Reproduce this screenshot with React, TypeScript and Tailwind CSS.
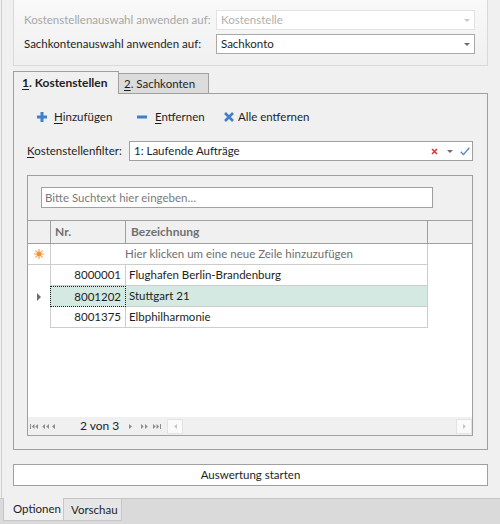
import { FunctionComponent, ReactNode } from "react";

const DropArrow: FunctionComponent<{ color?: string }> = ({ color = "#6d6d6d" }) => (
  <svg width="6" height="3" viewBox="0 0 6 3">
    <path d="M0 0h6L3 3z" fill={color} />
  </svg>
);

const Combo: FunctionComponent<{ value: string; disabled?: boolean }> = ({ value, disabled }) => (
  <div
    className={`flex h-full flex-1 items-center justify-between bg-white pl-[4px] pr-[4px] border ${
      disabled ? "border-[#e2e2e2] text-[#b0b0b0]" : "border-[#a9a9a9] text-[#1e1e1e]"
    }`}
  >
    <span>{value}</span>
    <DropArrow color={disabled ? "#c8c8c8" : "#6d6d6d"} />
  </div>
);

const U: FunctionComponent<{ children: ReactNode }> = ({ children }) => (
  <span className="underline underline-offset-[2px]">{children}</span>
);

const Star = () => (
  <svg width="10" height="10" viewBox="0 0 10 10">
    <g stroke="#f5a04a" strokeWidth="1.2" strokeLinecap="round">
      <path d="M5 0.5v9M0.5 5h9M1.8 1.8l6.4 6.4M8.2 1.8l-6.4 6.4" />
    </g>
    <circle cx="5" cy="5" r="2.3" fill="#f39234" />
  </svg>
);

const NavGlyph: FunctionComponent<{ d: string; w: number; color?: string }> = ({ d, w, color = "#8c8c8c" }) => (
  <svg width={w} height="5" viewBox={`0 0 ${w} 5`} className="shrink-0">
    <path d={d} fill={color} />
  </svg>
);

const rows = [
  { nr: "8000001", name: "Flughafen Berlin-Brandenburg" },
  { nr: "8001202", name: "Stuttgart 21", selected: true },
  { nr: "8001375", name: "Elbphilharmonie" },
];

export default function App() {
  return (
    <div className="relative h-[524px] w-[500px] overflow-hidden whitespace-nowrap bg-[#f0f0f0] font-['Lato',sans-serif] text-[11.5px] leading-none text-[#1e1e1e]">
      <div className="ml-[1px] flex h-[498px] flex-col border-l border-[#cfcfcf] pl-[11px] pr-[12px]">
        {/* group box */}
        <div className="h-[66px] border-x border-b border-[#d9d9d9] bg-linear-to-b from-[#f9f9f9] to-[#f0f0f0] pl-[10px] pr-[12px] pt-[10px]">
          <div className="flex h-[20px] items-center">
            <div className="w-[192px] text-[#a6a6a6]">Kostenstellenauswahl anwenden auf:</div>
            <Combo value="Kostenstelle" disabled />
          </div>
          <div className="mt-[4px] flex h-[20px] items-center">
            <div className="w-[192px]">Sachkontenauswahl anwenden auf:</div>
            <Combo value="Sachkonto" />
          </div>
        </div>

        {/* tabs */}
        <div className="mt-[5px] flex h-[22px] items-end">
          <div className="relative z-10 -mb-px flex h-[23px] w-[106px] items-center border border-b-0 border-[#a0a0a0] bg-[#f0f0f0] pl-[8px] text-[12px] font-bold">
            <span>
              <U>1</U>. Kostenstellen
            </span>
          </div>
          <div className="flex h-[20px] w-[90px] items-center border-r border-t border-[#a0a0a0] bg-[#dcdcdc] pl-[5px]">
            <span>
              <U>2</U>. Sachkonten
            </span>
          </div>
        </div>

        {/* tab page */}
        <div className="flex h-[357px] flex-col border border-[#a0a0a0] pl-[13px] pr-[14px]">
          <div className="mt-[13px] flex h-[20px] items-center pl-[10px]">
            <div className="flex w-[100px] items-center gap-[7px]">
              <svg width="10" height="10" viewBox="0 0 10 10">
                <path d="M3.5 0h3v3.5H10v3H6.5V10h-3V6.5H0v-3h3.5z" fill="#3f7fc9" />
              </svg>
              <span>
                <U>H</U>inzufügen
              </span>
            </div>
            <div className="flex w-[87px] items-center gap-[8px]">
              <svg width="10" height="10" viewBox="0 0 10 10">
                <path d="M0 3.5h10v3H0z" fill="#3f7fc9" />
              </svg>
              <span>
                <U>E</U>ntfernen
              </span>
            </div>
            <div className="flex items-center gap-[4px]">
              <svg width="10" height="10" viewBox="0 0 10 10">
                <path d="M1 1l8 8M9 1l-8 8" stroke="#3f7fc9" strokeWidth="2.6" />
              </svg>
              <span>
                Alle ent<U>f</U>ernen
              </span>
            </div>
          </div>

          <div className="mt-[14px] flex h-[20px] items-center">
            <div className="w-[102px]">
              <U>K</U>ostenstellenfilter:
            </div>
            <div className="flex h-full flex-1 items-center border border-[#a0a0a0] bg-white pl-[4px] pr-[2px]">
              <span className="flex-1">1: Laufende Aufträge</span>
              <svg width="7" height="7" viewBox="0 0 7 7" className="mr-[9px]">
                <path d="M1 1l5 5M6 1l-5 5" stroke="#d13438" strokeWidth="1.5" />
              </svg>
              <span className="mr-[7px] flex">
                <DropArrow />
              </span>
              <svg width="10" height="9" viewBox="0 0 10 9">
                <path d="M0.8 4.8l2.6 2.8L9.4 0.8" stroke="#4a86c8" strokeWidth="1.3" fill="none" />
              </svg>
            </div>
          </div>

          {/* grid */}
          <div className="mt-[14px] flex h-[261px] flex-col border border-[#a0a0a0] bg-white">
            <div className="h-[44px] bg-[#f0f0f0] pl-[13px] pt-[11px]">
              <div className="flex h-[21px] w-[392px] items-center border border-[#a0a0a0] bg-white pl-[3px] text-[#7a7a7a]">
                Bitte Suchtext hier eingeben…
              </div>
            </div>
            <div className="flex h-[24px] border-y border-[#a0a0a0] bg-[#f0f0f0] text-[12px] font-bold text-[#707070]">
              <div className="w-[23px] border-r border-[#a0a0a0]" />
              <div className="flex w-[75px] items-center border-r border-[#a0a0a0] pl-[4px]">Nr.</div>
              <div className="flex w-[302px] items-center border-r border-[#a0a0a0] pl-[5px]">Bezeichnung</div>
              <div className="flex-1" />
            </div>
            <div className="flex-1 bg-white">
              <div className="flex h-[21px] w-[400px] border-b border-r border-[#cdcdcd]">
                <div className="flex w-[23px] items-center justify-center border-r border-[#cdcdcd]">
                  <Star />
                </div>
                <div className="flex flex-1 items-center justify-center text-[#6e6e6e]">
                  Hier klicken um eine neue Zeile hinzuzufügen
                </div>
              </div>
              {rows.map((r) => (
                <div key={r.nr} className="flex h-[21px] w-[400px]">
                  <div className="flex w-[22px] items-center justify-center">
                    {r.selected && (
                      <svg width="4" height="8" viewBox="0 0 4 8">
                        <path d="M0 0l4 4-4 4z" fill="#6e6e6e" />
                      </svg>
                    )}
                  </div>
                  <div className="flex flex-1 border-b border-l border-r border-[#cdcdcd]">
                    <div
                      className={`flex items-center justify-end pr-[4px] ${
                        r.selected
                          ? "-mb-px -ml-px w-[76px] border border-dotted border-[#202020] bg-[#d3e9e2]"
                          : "w-[75px] border-r border-[#cdcdcd]"
                      }`}
                    >
                      {r.nr}
                    </div>
                    <div className={`flex flex-1 items-center pl-[3px] ${r.selected ? "bg-[#d3e9e2]" : ""}`}>
                      {r.name}
                    </div>
                  </div>
                </div>
              ))}
            </div>
            <div className="flex h-[18px] items-center bg-[#f0f0f0]">
              <span className="ml-[2px] flex">
                <NavGlyph w={8} d="M0 0h1v5H0zM4.5 0v5L1.8 2.5zM8 0v5L5.3 2.5z" />
              </span>
              <span className="ml-[4px] flex">
                <NavGlyph w={7} d="M3 0v5L0.3 2.5zM7 0v5L4.3 2.5z" />
              </span>
              <span className="ml-[3px] flex">
                <NavGlyph w={3} d="M3 0v5L0 2.5z" />
              </span>
              <div className="ml-[25px] w-[49px] text-[12px] text-[#1e1e1e]">2 von 3</div>
              <NavGlyph w={3} d="M0 0v5L3 2.5z" />
              <span className="ml-[9px] flex">
                <NavGlyph w={7} d="M0 0v5L2.7 2.5zM4 0v5L6.7 2.5z" />
              </span>
              <span className="ml-[5px] flex">
                <NavGlyph w={8} d="M0 0v5L2.7 2.5zM3.5 0v5L6.2 2.5zM7 0h1v5H7z" />
              </span>
              <div className="ml-[6px] flex h-[15px] flex-1 items-center">
                <div className="flex h-full w-[16px] items-center justify-center border border-[#e3e3e3] bg-[#fafafa]">
                  <NavGlyph w={3} d="M3 0v5L0 2.5z" color="#c6c6c6" />
                </div>
                <div className="h-full flex-1 bg-[#f0f0f0]" />
                <div className="flex h-full w-[16px] items-center justify-center border border-[#e3e3e3] bg-[#fafafa]">
                  <NavGlyph w={3} d="M0 0v5L3 2.5z" color="#c6c6c6" />
                </div>
              </div>
            </div>
          </div>
        </div>

        <div className="mt-[14px] flex h-[22px] items-center justify-center border border-[#a0a0a0] bg-white">
          Auswertung starten
        </div>
      </div>

      {/* bottom tabs */}
      <div className="flex h-[26px] items-start border-t border-[#c6c6c6] bg-[#dadada] pl-[3px]">
        <div className="-mt-px flex h-[23px] w-[61px] items-center border-x border-b border-[#c6c6c6] bg-[#f0f0f0] pl-[9px]">
          Optionen
        </div>
        <div className="flex h-[22px] w-[58px] items-center border-b border-r border-[#c6c6c6] bg-[#e6e6e6] pl-[7px]">
          Vorschau
        </div>
      </div>
    </div>
  );
}
